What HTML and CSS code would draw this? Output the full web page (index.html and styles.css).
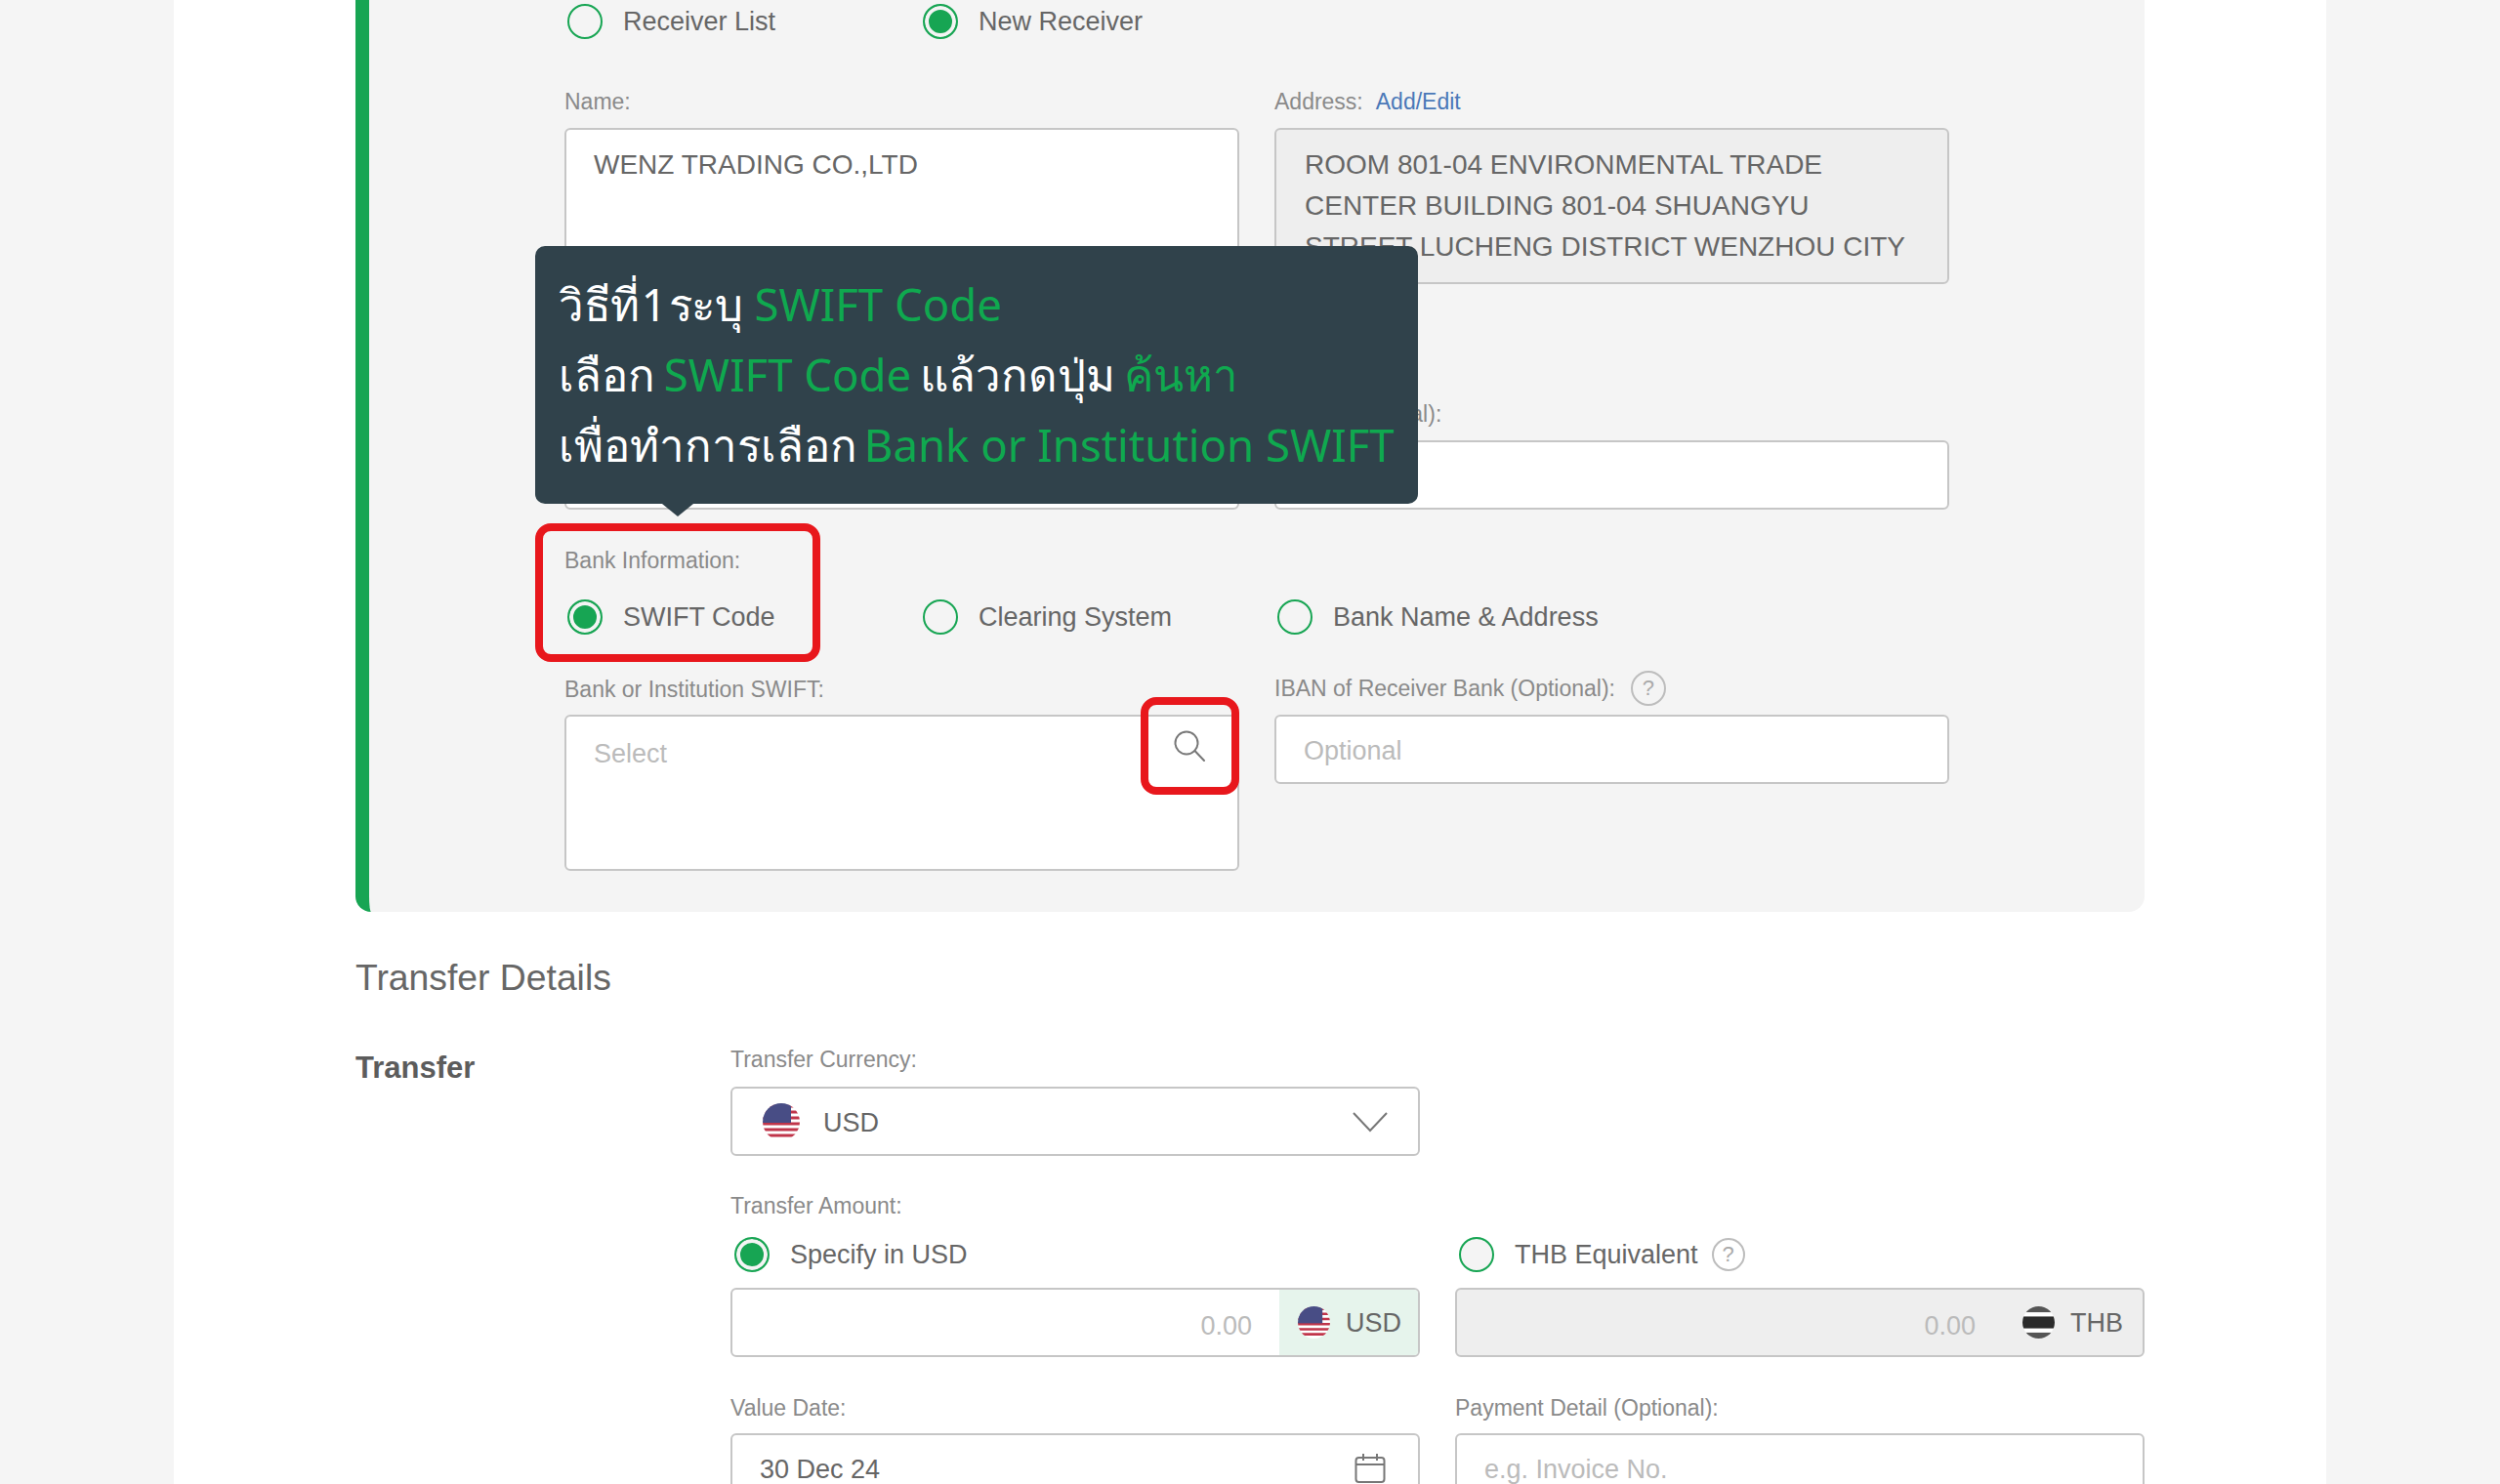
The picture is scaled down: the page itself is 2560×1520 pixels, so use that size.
FILE: index.html
```html
<!DOCTYPE html>
<html lang="en">
<head>
<meta charset="utf-8">
<title>Transfer</title>
<link rel="stylesheet" href="styles.css">
</head>
<body>
<main class="sheet">
  <section class="panel">
    <div class="radios">
      <label class="radio"><i class="dot"></i>Receiver List</label>
      <label class="radio"><i class="dot on"></i>New Receiver</label>
    </div>
    <div class="cols first">
      <div>
        <p class="lbl">Name:</p>
        <div class="box tall">WENZ TRADING CO.,LTD</div>
      </div>
      <div>
        <p class="lbl">Address:<a class="link">Add/Edit</a></p>
        <div class="box tall off">ROOM 801-04 ENVIRONMENTAL TRADE<br>CENTER BUILDING 801-04 SHUANGYU<br>STREET LUCHENG DISTRICT WENZHOU CITY</div>
      </div>
    </div>
    <div class="cols second">
      <div>
        <p class="lbl">Account No.:</p>
        <div class="box short"></div>
      </div>
      <div>
        <p class="lbl">Email (Optional):</p>
        <div class="box short"></div>
      </div>
    </div>
    <p class="lbl bank-lbl">Bank Information:</p>
    <div class="radios bank-radios">
      <label class="radio"><i class="dot on"></i>SWIFT Code</label>
      <label class="radio"><i class="dot"></i>Clearing System</label>
      <label class="radio"><i class="dot"></i>Bank Name &amp; Address</label>
    </div>
    <div class="cols third">
      <div>
        <p class="lbl">Bank or Institution SWIFT:</p>
        <div class="box tall hint search-box">Select
          <svg class="search" width="32" height="32" viewBox="0 0 32 32" fill="none" stroke="#777" stroke-width="2"><circle cx="13" cy="13" r="11.500"/><path d="M21.500 21l9.500 10" stroke-linecap="round"/></svg>
        </div>
      </div>
      <div>
        <p class="lbl lbl-help">IBAN of Receiver Bank (Optional):<span class="help">?</span></p>
        <div class="box short hint opt">Optional</div>
      </div>
    </div>
  </section>

  <h2 class="title">Transfer Details</h2>

  <section class="transfer">
    <h3 class="sub">Transfer</h3>
    <div class="form">
      <div class="one">
        <p class="lbl">Transfer Currency:</p>
        <div class="box short select">
          <svg class="flag" width="38" height="38" viewBox="0 0 38 38"><use href="#us"/></svg>
          <span class="grow">USD</span>
          <svg class="chev" width="36" height="22" viewBox="0 0 36 22" fill="none" stroke="#777" stroke-width="2"><path d="M1 2l17 18L35 2"/></svg>
        </div>
      </div>
      <p class="lbl amount-lbl">Transfer Amount:</p>
      <div class="cols amount-radios">
        <label class="radio"><i class="dot on"></i>Specify in USD</label>
        <label class="radio"><i class="dot"></i><span class="with-help">THB Equivalent<span class="help small">?</span></span></label>
      </div>
      <div class="cols">
        <div class="box short amount">
          <span class="grow zero">0.00</span>
          <span class="cur green">
            <svg width="33" height="33" viewBox="0 0 38 38"><use href="#us"/></svg>USD
          </span>
        </div>
        <div class="box short amount off">
          <span class="grow zero">0.00</span>
          <span class="cur">
            <svg width="33" height="33" viewBox="0 0 38 38"><use href="#th"/></svg>THB
          </span>
        </div>
      </div>
      <div class="cols last">
        <div>
          <p class="lbl">Value Date:</p>
          <div class="box short date">
            <span class="grow">30 Dec 24</span>
            <svg width="32" height="32" viewBox="0 0 32 32" fill="none" stroke="#777" stroke-width="2"><rect x="1.500" y="5" width="29" height="25" rx="3"/><path d="M1.500 12h29M9 1v7M23 1v7"/></svg>
          </div>
        </div>
        <div>
          <p class="lbl">Payment Detail (Optional):</p>
          <div class="box short hint date"><span class="grow">e.g. Invoice No.</span></div>
        </div>
      </div>
    </div>
  </section>

  <div class="tip">
    <p class="line-one">วิธีที่ 1 ระบุ <b>SWIFT Code</b></p>
    <p class="line-two">เลือก <b>SWIFT Code</b> แล้วกดปุ่ม <b>ค้นหา</b></p>
    <p class="line-three">เพื่อทำการเลือก <b>Bank or Institution SWIFT</b></p>
  </div>
  <div class="mark mark-bank"></div>
  <div class="mark mark-search"></div>
</main>

<svg class="defs" width="0" height="0">
  <defs>
    <clipPath id="round"><circle cx="19" cy="19" r="19"/></clipPath>
    <g id="us" clip-path="url(#round)">
      <rect width="38" height="38" fill="#fff"/>
      <path d="M0 1.500h38v3H0zM0 7.500h38v3H0zM0 13.500h38v3H0zM0 19.500h38v3H0zM0 25.500h38v3H0zM0 31.500h38v3H0z" fill="#c0354a"/>
      <rect width="29" height="20" fill="#484d85"/>
    </g>
    <g id="th" clip-path="url(#round)">
      <rect width="38" height="38" fill="#fff"/>
      <rect width="38" height="7" fill="#555"/>
      <rect y="12" width="38" height="14" fill="#2b2b2b"/>
      <rect y="31" width="38" height="7" fill="#555"/>
    </g>
  </defs>
</svg>
</body>
</html>
```
FILE: styles.css
```css
* { box-sizing: border-box; }
html, body { margin: 0; height: 1520px; overflow: hidden; }
body { background: #f5f5f5; font-family: "Liberation Sans", Arial, sans-serif; color: #666; }
p, h2, h3 { margin: 0; font-weight: 400; }
.defs { position: absolute; }

.sheet { position: relative; width: 2204px; height: 1520px; margin-left: 178px; padding: 0 186px; background: #fff; }

.panel { background: #f4f4f4; border-left: 14px solid #17a553; border-radius: 0 0 16px 16px; padding: 0 200px 42px 200px; height: 934px; }

.radios { display: grid; grid-template-columns: 364px 363px 364px; height: 44px; padding-left: 3px; align-items: center; }
.radio { display: flex; align-items: center; gap: 21px; font-size: 27px; line-height: 36px; white-space: nowrap; color: #666; }
.dot { flex: none; width: 36px; height: 36px; border-radius: 50%; border: 2px solid #17a553; background: #f4f4f4; }
.dot.on { background: #17a553; box-shadow: inset 0 0 0 4px #f4f4f4; }
.with-help { display: flex; align-items: center; }

.cols { display: grid; grid-template-columns: 691px 691px; column-gap: 36px; }
.lbl { font-size: 23px; line-height: 30px; height: 28px; color: #8a8a8a; margin-bottom: 14px; white-space: nowrap; }
.link { color: #4a78b8; margin-left: 13px; }
.first { margin-top: 45px; }
.second { margin-top: 118px; }
.bank-lbl { margin-top: 37px; margin-bottom: 23px; }
.third { margin-top: 37px; }
.third .lbl { margin-bottom: 13px; }
.lbl-help { display: flex; align-items: center; }

.box { border: 2px solid #c6c6c6; border-radius: 6px; background: #fff; font-size: 28px; line-height: 42px; color: #666; padding: 15px 28px; }
.tall { height: 160px; }
.short { height: 71px; }
.off { background: #eee; padding-left: 29px; }
.hint { color: #bbb; font-size: 27px; }
.opt { padding-top: 14px; }
.search-box { position: relative; padding-top: 17px; }
.search { position: absolute; right: 33px; top: 14px; }

.help { flex: none; display: inline-flex; align-items: center; justify-content: center; width: 36px; height: 36px; margin-left: 16px; border: 2px solid #bdbdbd; border-radius: 50%; font-size: 22px; line-height: 1; color: #aaa; }
.help.small { width: 34px; height: 34px; margin-left: 14px; }

.title { font-size: 37.300px; line-height: 44px; margin-top: 45px; color: #666; }
.transfer { display: flex; margin-top: 47px; }
.sub { flex: none; width: 384px; font-size: 31px; line-height: 48px; font-weight: 700; color: #5c5c5c; }
.form { flex: none; width: 1448px; }
.form .cols { grid-template-columns: 706px 706px; }
.form .lbl { margin-bottom: 15px; }
.form .box { font-size: 27px; }
.one { width: 706px; }
.select { display: flex; align-items: center; padding: 0 31px 0 31px; }
.flag { margin-right: 24px; }
.grow { flex: 1; padding-top: 2px; }
.form .amount-lbl { margin-top: 36px; margin-bottom: 19px; }
.amount-radios { height: 36px; margin-bottom: 16px; padding-left: 4px; }
.amount { display: flex; align-items: stretch; padding: 0; overflow: hidden; }
.zero { color: #bbb; text-align: right; padding: 0 28px 0 0; line-height: 74px; }
.amount.off .zero { padding-right: 29px; }
.cur { display: flex; align-items: center; gap: 16px; width: 142px; padding-left: 19px; }
.cur.green { background: #e6f4ec; }
.amount.off .cur { padding-left: 19px; }
.last { margin-top: 37px; }
.form .last .lbl { margin-bottom: 13px; }
.date { display: flex; align-items: center; padding: 0 33px 0 28px; }

.tip { position: absolute; left: 370px; top: 252px; width: 904px; height: 264px; padding: 23px 24px 0; border-radius: 10px; background: #30424b; color: #fff; font-family: "Noto Sans", "Open Sans", sans-serif; font-size: 45.500px; line-height: 72px; white-space: nowrap; }
.tip::after { content: ""; position: absolute; left: 130px; top: 100%; border: solid transparent; border-width: 13px 16px 0; border-top-color: #30424b; }
.tip b { font-weight: 400; color: #0fa94f; word-spacing: normal; letter-spacing: 0; }
.line-one { word-spacing: -9px; letter-spacing: -0.500px; }
.line-one b { margin-left: 10px; }
.line-two { word-spacing: -3px; }
.line-three { word-spacing: -5px; }

.mark { position: absolute; border: 8px solid #e8171c; border-radius: 16px; }
.mark-bank { left: 370px; top: 536px; width: 292px; height: 142px; }
.mark-search { left: 990px; top: 714px; width: 101px; height: 100px; }
```
